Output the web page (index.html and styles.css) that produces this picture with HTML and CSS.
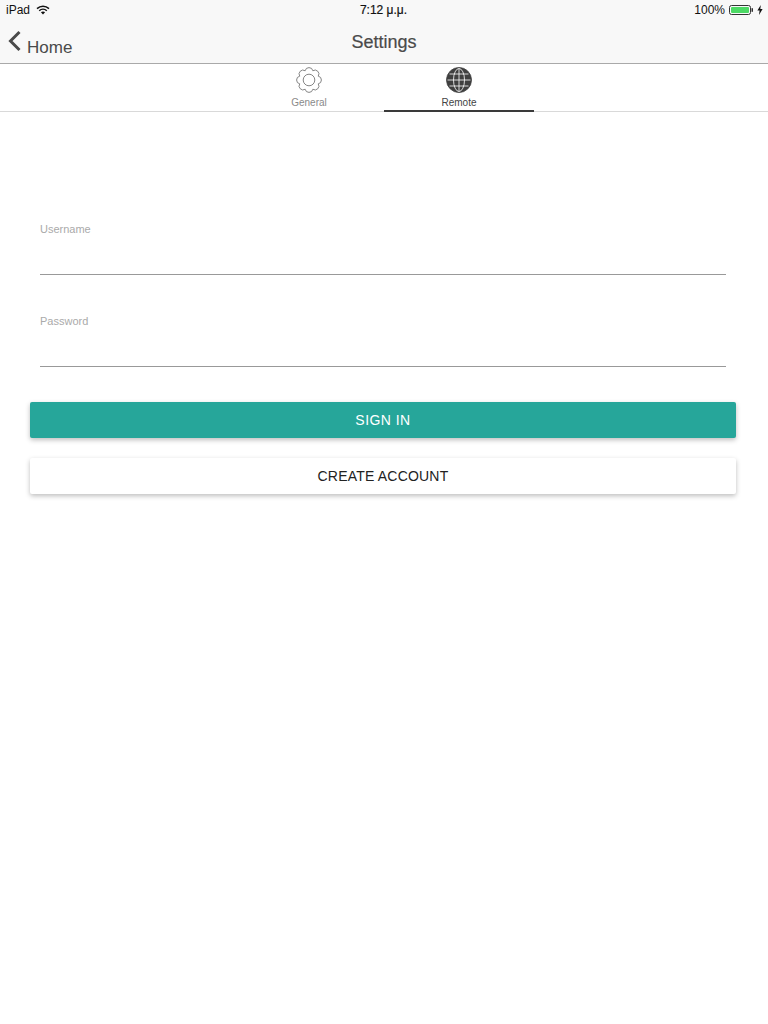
FILE: index.html
```html
<!DOCTYPE html>
<html lang="en">
<head>
    <meta charset="UTF-8">
    <meta name="viewport" content="width=device-width, initial-scale=1.0">
    <title>Settings</title>
    <link rel="stylesheet" href="styles.css">
</head>
<body>
    <header class="topbar">
        <div class="status">
            <div class="status-left">
                <span>iPad</span>
                <svg class="wifi" width="14" height="10" viewBox="0 0 14 10">
                    <path d="M1 3.6C4.4.4 9.6.4 13 3.6" fill="none" stroke="#111" stroke-width="1.5"/>
                    <path d="M3.2 5.8C5.4 3.8 8.6 3.8 10.8 5.8" fill="none" stroke="#111" stroke-width="1.5"/>
                    <path d="M4.9 7.2C6.1 6.1 7.9 6.1 9.1 7.2L7 9.6Z" fill="#111"/>
                </svg>
            </div>
            <div class="status-time">7:12 μ.μ.</div>
            <div class="status-right">
                <span>100%</span>
                <svg width="24" height="10" viewBox="0 0 24 10">
                    <rect x="0.5" y="0.5" width="21" height="9" rx="2" fill="none" stroke="#333"/>
                    <rect x="2" y="2" width="18" height="6" rx="1" fill="#4cd964"/>
                    <rect x="22.5" y="3.2" width="1.5" height="3.6" fill="#333"/>
                </svg>
                <svg width="6" height="10" viewBox="0 0 6 10">
                    <path d="M3.8 0 .4 5.6h2.200L2 10l3.600-6H3.300Z" fill="#111"/>
                </svg>
            </div>
        </div>
        <div class="navbar">
            <a class="back" href="#">
                <svg width="13" height="22" viewBox="0 0 13 22">
                    <path d="M11.500 2 2.500 11l9 9" fill="none" stroke="#4a4a4a" stroke-width="3"/>
                </svg>
                <span>Home</span>
            </a>
            <h1>Settings</h1>
        </div>
    </header>

    <nav class="tabs">
        <a class="tab" href="#">
            <svg width="26" height="26" viewBox="0 0 26 26" fill="none" stroke="#777" stroke-width="0.9">
                <circle cx="13" cy="13" r="5.800"/>
                <path d="M22.240 9.170A3.900 3.900 0 0 1 22.240 16.830A3.900 3.900 0 0 1 16.830 22.240A3.900 3.900 0 0 1 9.170 22.240A3.900 3.900 0 0 1 3.760 16.830A3.900 3.900 0 0 1 3.760 9.170A3.900 3.900 0 0 1 9.170 3.760A3.900 3.900 0 0 1 16.830 3.760A3.900 3.900 0 0 1 22.240 9.170Z"/>
            </svg>
            <span>General</span>
        </a>
        <a class="tab active" href="#">
            <svg width="26" height="26" viewBox="0 0 26 26" fill="none" stroke="#fff" stroke-width="0.8">
                <circle cx="13" cy="13" r="12.500" fill="#3f3f3f" stroke="#3f3f3f"/>
                <ellipse cx="13" cy="13" rx="5.500" ry="11.500"/>
                <path d="M13 1.500v23M1.500 13h23M3.500 7h19M3.500 19h19"/>
            </svg>
            <span>Remote</span>
        </a>
    </nav>

    <main class="content">
        <form class="login">
            <label class="field">
                <span>Username</span>
                <input type="text">
            </label>
            <label class="field">
                <span>Password</span>
                <input type="password">
            </label>
            <button class="btn btn-primary" type="button">SIGN IN</button>
            <button class="btn" type="button">CREATE ACCOUNT</button>
        </form>
    </main>
</body>
</html>
```

FILE: styles.css
```css
* {
    box-sizing: border-box;
}

body {
    margin: 0;
    font-family: 'Liberation Sans', Arial, sans-serif;
    background-color: #ffffff;
    color: #333;
}

.topbar {
    height: 64px;
    background-color: #f8f8f8;
    border-bottom: 1px solid #a9a9a9;
}

.status {
    height: 20px;
    padding: 0 5px 0 6px;
    display: grid;
    grid-template-columns: 1fr auto 1fr;
    align-items: center;
    font-size: 12px;
    color: #111;
}

.status-left {
    display: flex;
    align-items: center;
    gap: 6px;
}

.status-time {
    margin-right: 2px;
    -webkit-text-stroke: 0.2px #111;
}

.status-right {
    display: flex;
    justify-content: flex-end;
    align-items: center;
    gap: 4px;
}

.navbar {
    height: 43px;
    padding-top: 2px;
    display: flex;
    justify-content: center;
    align-items: center;
    position: relative;
}

.navbar h1 {
    margin: 0;
    font-size: 18px;
    font-weight: normal;
    color: #4a4a4a;
    -webkit-text-stroke: 0.2px #4a4a4a;
}

.back {
    position: absolute;
    left: 8px;
    top: 10px;
    display: flex;
    align-items: flex-end;
    gap: 6px;
    font-size: 17px;
    color: #4a4a4a;
    text-decoration: none;
}

.back span {
    margin-bottom: -6px;
}

.tabs {
    height: 48px;
    display: flex;
    justify-content: center;
    border-bottom: 1px solid #d9d9d9;
}

.tab {
    width: 150px;
    height: 48px;
    padding-top: 3px;
    display: flex;
    flex-direction: column;
    align-items: center;
    gap: 4px;
    font-size: 10px;
    color: #8a8a8a;
    text-decoration: none;
}

.tab.active {
    color: #444;
    border-bottom: 2px solid #3a3a3a;
}

.content {
    padding: 111px 32px 0 30px;
}

.field {
    display: block;
    margin: 0 10px 40px 10px;
    font-size: 11px;
    color: #aaa;
}

.field:nth-child(2) {
    margin-bottom: 0;
}

.field span {
    display: block;
    line-height: 12px;
}

.field input {
    display: block;
    width: 100%;
    height: 40px;
    border: 0;
    border-bottom: 1px solid #999;
    outline: none;
    padding: 0;
    background: transparent;
}

.btn {
    display: block;
    width: 100%;
    height: 36px;
    margin-bottom: 20px;
    border: 0;
    border-radius: 2px;
    background-color: #ffffff;
    color: #222;
    font-family: inherit;
    font-size: 14px;
    letter-spacing: 0.2px;
    box-shadow: 0 2px 5px rgba(0, 0, 0, 0.26);
}

.btn-primary {
    margin-top: 35px;
    background-color: #26a69a;
    color: #ffffff;
    letter-spacing: 0.45px;
}
```
